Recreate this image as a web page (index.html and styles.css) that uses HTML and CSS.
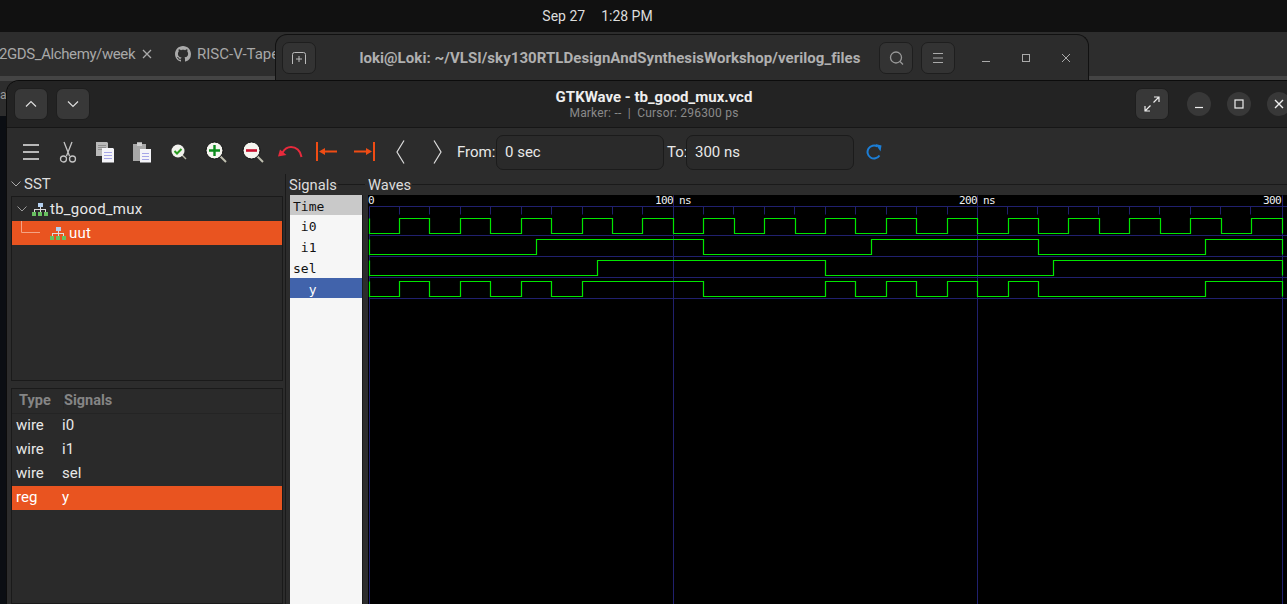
FILE: index.html
```html
<!DOCTYPE html>
<html lang="en">
<head>
  <meta charset="UTF-8" />
  <title>GTKWave - tb_good_mux.vcd</title>
  <link rel="stylesheet" href="styles.css">
</head>
<body>
  <div class="topbar"><span>Sep 27</span><span>1:28 PM</span></div>

  <!-- browser behind everything -->
  <div class="browser">
    <div class="tab"><span class="tab-name">2GDS_Alchemy/week</span>
      <svg class="tab-x" width="10" height="10" viewBox="0 0 10 10"><path d="M1 1L9 9M9 1L1 9" /></svg>
    </div>
    <div class="tab tab2">
      <svg width="16" height="16" viewBox="0 0 16 16"><path fill="#aaa" d="M8 0C3.58 0 0 3.58 0 8c0 3.54 2.29 6.53 5.47 7.59.4.07.55-.17.55-.38 0-.19-.01-.82-.01-1.49-2.01.37-2.53-.49-2.69-.94-.09-.23-.48-.94-.82-1.13-.28-.15-.68-.52-.01-.53.63-.01 1.08.58 1.23.82.72 1.21 1.87.87 2.33.66.07-.52.28-.87.51-1.07-1.78-.2-3.64-.89-3.64-3.95 0-.87.31-1.59.82-2.15-.08-.2-.36-1.02.08-2.12 0 0 .67-.21 2.2.82.64-.18 1.32-.27 2-.27.68 0 1.36.09 2 .27 1.53-1.04 2.2-.82 2.2-.82.44 1.1.16 1.92.08 2.12.51.56.82 1.27.82 2.15 0 3.07-1.87 3.75-3.65 3.95.29.25.54.73.54 1.48 0 1.07-.01 1.93-.01 2.2 0 .21.15.46.55.38A8.013 8.013 0 0016 8c0-4.42-3.58-8-8-8z"/></svg>
      <span class="tab-name">RISC-V-Tapeout</span>
    </div>
  </div>
  <div class="browser-strip"><span>a</span></div>

  <!-- terminal window -->
  <div class="terminal">
    <div class="hbtn term-btn">
      <svg width="16" height="14" viewBox="0 0 16 14" fill="none" stroke="#bbb"><path d="M1.500 13V3.500a2 2 0 0 1 2-2h9a2 2 0 0 1 2 2V13M8 5v6M5 8h6"/></svg>
    </div>
    <div class="term-title">loki@Loki: ~/VLSI/sky130RTLDesignAndSynthesisWorkshop/verilog_files</div>
    <div class="hbtn term-btn">
      <svg width="15" height="15" viewBox="0 0 15 15" fill="none" stroke="#999" stroke-width="1.3"><circle cx="7" cy="6.500" r="5.500"/><path d="M11 10.500l3 3"/></svg>
    </div>
    <div class="hbtn term-btn">
      <svg width="12" height="12" viewBox="0 0 12 12" stroke="#aaa"><path d="M1 1.500h10M1 6h10M1 10.500h10"/></svg>
    </div>
    <div class="term-controls">
      <svg width="10" height="10" viewBox="0 0 10 10" stroke="#aaa"><path d="M1 8.500h8"/></svg>
      <svg width="10" height="10" viewBox="0 0 10 10" fill="none" stroke="#aaa"><rect x="1.500" y="1.500" width="7" height="7"/></svg>
      <svg width="10" height="10" viewBox="0 0 10 10" stroke="#aaa"><path d="M1 1l8 8M9 1l-8 8"/></svg>
    </div>
  </div>

  <!-- gtkwave window -->
  <div class="window">
    <header class="header">
      <div class="header-left">
        <div class="hbtn"><svg width="12" height="8" viewBox="0 0 12 8" fill="none" stroke="#ddd" stroke-width="1.2"><path d="M1 6.500L6 1.500l5 5"/></svg></div>
        <div class="hbtn"><svg width="12" height="8" viewBox="0 0 12 8" fill="none" stroke="#ddd" stroke-width="1.2"><path d="M1 1.500l5 5 5-5"/></svg></div>
      </div>
      <div class="header-title">
        <div class="title">GTKWave - tb_good_mux.vcd</div>
        <div class="subtitle">Marker: --  |  Cursor: 296300 ps</div>
      </div>
      <div class="header-right">
        <div class="hbtn expand"><svg width="16" height="16" viewBox="0 0 16 16" fill="none" stroke="#eee" stroke-width="1.2"><path d="M9.500 6.500L15 1M10 1h5v5M6.500 9.500L1 15M1 10v5h5"/></svg></div>
        <div class="circle"><svg width="10" height="10" viewBox="0 0 10 10" stroke="#eee" stroke-width="1.2"><path d="M1 8.500h8"/></svg></div>
        <div class="circle"><svg width="10" height="10" viewBox="0 0 10 10" fill="none" stroke="#eee" stroke-width="1.2"><rect x="1" y="1" width="8" height="8"/></svg></div>
        <div class="circle"><svg width="10" height="10" viewBox="0 0 10 10" stroke="#eee" stroke-width="1.4"><path d="M1 1l8 8M9 1l-8 8"/></svg></div>
      </div>
    </header>

    <div class="toolbar">
      <div class="tool"><svg width="16" height="16" viewBox="0 0 16 16" stroke="#e6e6e6" stroke-width="1.4"><path d="M0 1h16M0 8h16M0 15h16"/></svg></div>
      <div class="tool"><svg width="18" height="22" viewBox="0 0 18 22" fill="none" stroke="#c4c4c4" stroke-width="1.3"><path d="M5 1l5.500 14M13 1L7.500 15"/><circle cx="4.500" cy="18" r="3"/><circle cx="13.500" cy="18" r="3"/></svg></div>
      <div class="tool"><svg width="20" height="21" viewBox="0 0 20 21"><path fill="#b9b9b9" d="M1 0h11l1 1v13H1z"/><path fill="#8e8e8e" d="M3 3h8v1H3zM3 5h8v1H3zM3 7h8v1H3z"/><path fill="#f4f4f8" d="M7 6h11l1 1v13.500H7z"/><path fill="#a6a6e8" d="M9 10h8v1H9zM9 13h8v1H9zM9 16h8v1H9z"/></svg></div>
      <div class="tool"><svg width="20" height="21" viewBox="0 0 20 21"><path fill="#a8a8a8" d="M1 2h4V0h5v2h4v17H1z"/><path fill="#d0d0d0" d="M5 1h5v3H5z"/><path fill="#f4f4f8" d="M8 7h11v13.500H8z"/><path fill="#a6a6e8" d="M10 11h7v1h-7zM10 14h7v1h-7zM10 17h7v1h-7z"/></svg></div>
      <div class="tool"><svg width="16" height="16" viewBox="0 0 16 16" fill="none"><path d="M11 11l4 4" stroke="#b8b8a8" stroke-width="1.500"/><circle cx="7" cy="7" r="6.500" fill="#f2f2ee"/><path d="M3.500 7l2.500 2.500 4.500-4.500" stroke="#2a9a20" stroke-width="2"/></svg></div>
      <div class="tool"><svg width="22" height="22" viewBox="0 0 22 22" fill="none"><path d="M15 15l6 6" stroke="#c0c0b0" stroke-width="2"/><circle cx="9.500" cy="9.500" r="8.500" fill="#f6f6f0" stroke="#111"/><path d="M9.500 4v11M4 9.500h11" stroke="#0b8a1c" stroke-width="2.400"/></svg></div>
      <div class="tool"><svg width="22" height="22" viewBox="0 0 22 22" fill="none"><path d="M15 15l6 6" stroke="#c0c0b0" stroke-width="2"/><circle cx="9.500" cy="9.500" r="8.500" fill="#f6f6f0" stroke="#111"/><path d="M4 9.500h11" stroke="#c8102e" stroke-width="2.600"/></svg></div>
      <div class="tool"><svg width="26" height="18" viewBox="0 0 26 18" fill="none"><path d="M24.500 14C23.500 7.500 19 4 14 4 10.500 4 7.500 6 5.500 9.500" stroke="#e82a3c" stroke-width="2"/><path d="M1 13.500L3 6.500 9.500 12z" fill="#e82a3c"/></svg></div>
      <div class="tool"><svg width="24" height="20" viewBox="0 0 24 20" fill="#f04c14"><path d="M1 0h2v19H1zM4 9.500L10 6v2.500h12v2H10V13z"/></svg></div>
      <div class="tool"><svg width="24" height="20" viewBox="0 0 24 20" fill="#f04c14"><path d="M21 0h2v19h-2zM20 9.500L14 6v2.500H2v2h12V13z"/></svg></div>
      <div class="tool"><svg width="9" height="24" viewBox="0 0 9 24" fill="none" stroke="#ddd" stroke-width="1.200"><path d="M8 .5L1 12l7 11.500"/></svg></div>
      <div class="tool"><svg width="9" height="24" viewBox="0 0 9 24" fill="none" stroke="#ddd" stroke-width="1.200"><path d="M1 .5L8 12 1 23.500"/></svg></div>
      <label class="range-label from">From:</label>
      <div class="entry">0 sec</div>
      <label class="range-label to">To:</label>
      <div class="entry">300 ns</div>
      <svg class="reload" width="16" height="16" viewBox="0 0 16 16" fill="none"><path d="M13.500 11.500A6.500 6.500 0 1 1 11.500 2.500" stroke="#1c7ed6" stroke-width="2"/><path d="M9.500 0l6 1.500-1 6z" fill="#1c7ed6"/></svg>
    </div>

    <main class="panes">
      <aside class="sst">
        <div class="sst-head"><svg width="10" height="6" viewBox="0 0 10 6" fill="none" stroke="#aaa"><path d="M.5 .5L5 5 9.500 .5"/></svg><span>SST</span></div>
        <div class="frame tree">
          <div class="row tree-root">
            <svg class="chev" width="10" height="6" viewBox="0 0 10 6" fill="none" stroke="#999"><path d="M.5 .5L5 5 9.500 .5"/></svg>
            <svg class="hier" width="16" height="13" viewBox="0 0 16 13"><path fill="#b4d0f0" d="M6 0h5v4H6z"/><path fill="#ddd" d="M8 4h1v2H8zM2 6h12v1H2zM2 7h1v2H2zM8 7h1v2H8zM13 7h1v2h-1z"/><path fill="#68c060" d="M0 9h4v4H0zM6 9h4v4H6zM12 9h4v4h-4z"/></svg>
            <span>tb_good_mux</span>
          </div>
          <div class="row selected tree-child">
            <svg class="branch" width="19" height="12" viewBox="0 0 19 12" fill="none" stroke="#f4a384"><path d="M.5 0v11.500H19"/></svg>
            <svg class="hier" width="16" height="13" viewBox="0 0 16 13"><path fill="#b4d0f0" d="M6 0h5v4H6z"/><path fill="#ddd" d="M8 4h1v2H8zM2 6h12v1H2zM2 7h1v2H2zM8 7h1v2H8zM13 7h1v2h-1z"/><path fill="#68c060" d="M0 9h4v4H0zM6 9h4v4H6zM12 9h4v4h-4z"/></svg>
            <span>uut</span>
          </div>
        </div>
        <div class="frame signals-table">
          <div class="row thead"><span class="col-type">Type</span><span class="col-name">Signals</span></div>
          <div class="row"><span class="col-type">wire</span><span class="col-name">i0</span></div>
          <div class="row"><span class="col-type">wire</span><span class="col-name">i1</span></div>
          <div class="row"><span class="col-type">wire</span><span class="col-name">sel</span></div>
          <div class="row selected"><span class="col-type">reg</span><span class="col-name">y</span></div>
        </div>
      </aside>

      <section class="signals">
        <div class="frame-head"><span>Signals</span></div>
        <div class="signal-list">
          <div class="sig sig-time">Time</div>
          <div class="sig"> i0</div>
          <div class="sig"> i1</div>
          <div class="sig">sel</div>
          <div class="sig sig-active">  y</div>
        </div>
      </section>

      <section class="waves">
        <div class="frame-head"><span>Waves</span></div>
        <svg class="canvas" width="919" height="409" viewBox="368 195 919 409">
          <g transform="translate(.5 .5)" fill="none">
            <path class="grid" d="M369 206H1287M369 235H1287M369 256H1287M369 277H1287M369 298H1287M369 206V604M673 195V604M977 195V604M1282 195V604"/>
            <path class="grid" d="M399 206V214M429 206V214M460 206V214M490 206V214M521 206V214M551 206V214M582 206V214M612 206V214M642 206V214M703 206V214M733 206V214M764 206V214M794 206V214M825 206V214M855 206V214M886 206V214M916 206V214M947 206V214M1007 206V214M1037 206V214M1068 206V214M1098 206V214M1129 206V214M1159 206V214M1190 206V214M1220 206V214M1250 206V214"/>
            <path class="wave" d="M369 218V233H399V218H429V233H460V218H490V233H521V218H551V233H582V218H612V233H642V218H673V233H703V218H734V233H764V218H795V233H825V218H855V233H886V218H916V233H947V218H977V233H1008V218H1038V233H1068V218H1099V233H1129V218H1160V233H1190V218H1221V233H1251V218H1282V233"/>
            <path class="wave" d="M369 239V254H536V239H703V254H871V239H1038V254H1205V239H1282V254"/>
            <path class="wave" d="M369 260V275H597V260H825V275H1053V260H1282V275"/>
            <path class="wave" d="M369 281V296H399V281H429V296H460V281H490V296H521V281H551V296H582V281H703V296H825V281H855V296H886V281H916V296H947V281H977V296H1008V281H1038V296H1205V281H1282V296"/>
          </g>
          <text class="tick" x="368" y="204">0</text>
          <text class="tick" x="655" y="204">100 ns</text>
          <text class="tick" x="959" y="204">200 ns</text>
          <text class="tick" x="1263" y="204">300</text>
        </svg>
      </section>
    </main>
  </div>
</body>
</html>
```

FILE: styles.css
```css
html, body {
  margin: 0;
  height: 100%;
  overflow: hidden;
}
body {
  position: relative;
  background: #0b0e13;
  font-family: Roboto, "Noto Sans", sans-serif;
  color: #e8e8e8;
}

.topbar {
  height: 32px;
  background: #111;
  display: flex;
  justify-content: center;
  align-items: center;
  gap: 16px;
  font-size: 14px;
  color: #ddd;
  padding-right: 92px;
  box-sizing: border-box;
}

.browser {
  position: absolute;
  left: 0;
  right: 0;
  top: 32px;
  height: 44px;
  background: #2d2d2d;
  display: flex;
  align-items: center;
  font-size: 15px;
  color: #a8a8a8;
  overflow: hidden;
}
.tab {
  display: flex;
  align-items: center;
  width: 175px;
  flex: none;
  white-space: nowrap;
}
.tab-name {
  margin-left: -1px;
  letter-spacing: -.4px;
}
.tab-x {
  margin-left: 7px;
  stroke: #aaa;
  stroke-width: 1.3;
}
.tab2 {
  gap: 6px;
}
.tab2 .tab-name {
  margin-left: 0;
  letter-spacing: 0;
}
.browser-strip {
  position: absolute;
  left: 0;
  right: 0;
  top: 76px;
  height: 40px;
  background: linear-gradient(#444 0 5px, #2d2d2d 5px);
  color: #999;
  font-size: 12px;
  padding-top: 12px;
  box-sizing: border-box;
}

.terminal {
  position: absolute;
  left: 275px;
  top: 34px;
  width: 814px;
  height: 47px;
  box-sizing: border-box;
  background: #2c2c2c;
  border: 1px solid #111;
  border-bottom: 0;
  border-radius: 12px 12px 0 0;
  display: flex;
  align-items: center;
  padding-left: 6px;
  gap: 8px;
}
.term-title {
  width: 522px;
  margin-left: 25px;
  text-align: center;
  font-size: 15px;
  font-weight: 700;
  letter-spacing: .06px;
  color: #b0b0b0;
  white-space: nowrap;
}
.term-controls {
  display: flex;
  justify-content: space-between;
  width: 90px;
  margin-left: 18px;
}

.hbtn {
  width: 34px;
  height: 32px;
  box-sizing: border-box;
  background: #383838;
  border: 1px solid #1e1e1e;
  border-radius: 7px;
  display: flex;
  align-items: center;
  justify-content: center;
  flex: none;
}
.term-btn {
  background: #333;
}

.window {
  position: absolute;
  left: 7px;
  top: 81px;
  width: 1294px;
  height: 523px;
  display: flex;
  flex-direction: column;
  background: #2c2c2c;
  border-radius: 12px 0 0 0;
  box-shadow: 0 0 0 1px #0c0c0c;
}

.header {
  height: 47px;
  flex: none;
  display: grid;
  grid-template-columns: 1fr auto 1fr;
  align-items: center;
  background: #232323;
  border-bottom: 1px solid #161616;
  border-radius: 12px 0 0 0;
  box-sizing: border-box;
}
.header-left {
  display: flex;
  gap: 8px;
  padding-left: 7px;
}
.header-right {
  display: flex;
  align-items: center;
  justify-content: flex-end;
  gap: 16px;
  margin-right: 10px;
}
.header-right .expand {
  margin-right: 2px;
}
.circle {
  width: 24px;
  height: 24px;
  border-radius: 50%;
  background: #383838;
  display: flex;
  align-items: center;
  justify-content: center;
}
.header-title {
  text-align: center;
  padding-top: 2px;
}
.title {
  font-size: 15px;
  font-weight: 700;
  line-height: 17px;
  color: #eee;
}
.subtitle {
  font-size: 12px;
  letter-spacing: .2px;
  line-height: 15px;
  color: #8a8a8a;
  white-space: pre;
}

.toolbar {
  height: 46px;
  flex: none;
  display: flex;
  align-items: center;
  padding-left: 5px;
  padding-top: 2px;
  box-sizing: border-box;
  font-size: 15px;
}
.tool {
  width: 37px;
  display: flex;
  align-items: center;
  justify-content: center;
  flex: none;
}
.range-label.from {
  margin-left: 1px;
  width: 39px;
}
.range-label.to {
  margin-left: 3px;
  width: 19px;
}
.entry {
  width: 168px;
  height: 35px;
  box-sizing: border-box;
  background: #2a2a2a;
  border: 1px solid #1b1b1b;
  border-radius: 7px;
  padding-left: 8px;
  line-height: 33px;
}
.reload {
  margin-left: 12px;
}

.panes {
  flex: 1;
  display: flex;
  min-height: 0;
}

.sst {
  width: 279px;
  flex: none;
  box-sizing: border-box;
  padding-left: 4px;
  padding-right: 2px;
  border-right: 1px solid #1a1a1a;
  display: flex;
  flex-direction: column;
  font-size: 15px;
}
.sst-head {
  height: 22px;
  padding-bottom: 2px;
  box-sizing: border-box;
  display: flex;
  align-items: center;
  gap: 3px;
  color: #ddd;
}
.frame {
  border: 1px solid #1a1a1a;
  box-sizing: border-box;
  background: #2a2a2a;
}
.tree {
  height: 185px;
}
.tree span {
  letter-spacing: .25px;
  margin-left: 2px;
}
.signals-table {
  margin-top: 7px;
  flex: 1;
}
.signals-table .row {
  padding-bottom: 2px;
  box-sizing: border-box;
}
.row {
  height: 24px;
  display: flex;
  align-items: center;
  white-space: nowrap;
}
.selected {
  background: #e95420;
  color: #fff;
}
.tree-root .chev {
  margin-left: 5px;
}
.tree-root .hier {
  margin-left: 5px;
}
.tree-child .branch {
  margin-left: 9px;
  align-self: flex-start;
}
.tree-child .hier {
  margin-left: 10px;
}
.tree-child span {
  margin-left: 3px;
}
.col-type {
  width: 46px;
  padding-left: 4px;
}
.thead {
  height: 25px;
  font-weight: 700;
  color: #858585;
  border-bottom: 1px solid #242424;
  font-size: 14.5px;
}
.thead .col-type {
  padding-left: 7px;
  width: 44px;
  border-right: 1px solid #262626;
}

.frame-head {
  height: 21px;
  display: flex;
  align-items: center;
  font-size: 14.7px;
  color: #ddd;
  gap: 1px;
  flex: none;
}
.frame-head::after {
  content: "";
  flex: 1;
  border-top: 1px solid #1a1a1a;
}
.signals {
  width: 79px;
  flex: none;
  display: flex;
  flex-direction: column;
  padding-left: 3px;
  box-sizing: border-box;
}
.signal-list {
  flex: 1;
  margin-left: 1px;
  width: 72px;
  background: #f6f6f6;
  border-right: 1px solid #1a1a1a;
  font-family: "DejaVu Sans Mono", monospace;
  font-size: 13px;
  color: #111;
}
.sig {
  height: 20px;
  margin-bottom: 1px;
  line-height: 24px;
  white-space: pre;
  padding-left: 3px;
}
.sig-time {
  background: #c9c9c9;
  margin-bottom: 0;
}
.sig-active {
  background: #4163ab;
  color: #fff;
}

.waves {
  flex: 1;
  min-width: 0;
  display: flex;
  flex-direction: column;
  padding-left: 3px;
  box-sizing: border-box;
}
.canvas {
  display: block;
  background: #000;
  flex: none;
}
.grid {
  stroke: #20206e;
}
.wave {
  stroke: #00e600;
  stroke-width: 1.2;
}
.tick {
  font-family: "DejaVu Sans Mono", monospace;
  font-size: 11px;
  letter-spacing: -.6px;
  fill: #f0f0f0;
}
```
